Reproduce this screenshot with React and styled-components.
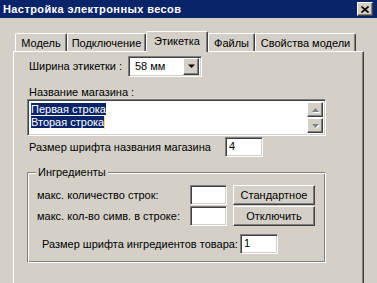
import React from 'react';
import styled, { createGlobalStyle } from 'styled-components';

const GlobalStyle = createGlobalStyle`
  html, body {
    margin: 0;
    padding: 0;
    background: #d4d0c8;
  }
`;

const raised = `
  border: 1px solid;
  border-color: #fff #404040 #404040 #fff;
  box-shadow: inset -1px -1px 0 #808080;
`;

const sunken = `
  border: 1px solid;
  border-color: #808080 #fff #fff #808080;
  box-shadow: inset 1px 1px 0 #404040, inset -1px -1px 0 #d4d0c8;
`;

const Window = styled.div`
  width: 377px;
  height: 283px;
  display: flex;
  flex-direction: column;
  overflow: hidden;
  background: #d4d0c8;
  color: #000;
  font-family: "Liberation Sans", Arial, sans-serif;
  font-size: 11px;
  line-height: 13px;
`;

const TitleBar = styled.div`
  height: 18px;
  flex-shrink: 0;
  display: flex;
  align-items: center;
  justify-content: space-between;
  padding: 0 4px 0 3px;
  background: #0a246a;
  color: #fff;
  font-weight: bold;
  letter-spacing: 0.4px;
`;

const CloseButton = styled.div`
  width: 14px;
  height: 12px;
  display: flex;
  align-items: center;
  justify-content: center;
  background: #d4d0c8;
  ${raised}
`;

const Body = styled.div`
  flex: 1;
  display: flex;
  flex-direction: column;
  padding: 13px 13px 0 13px;
`;

const TabStrip = styled.div`
  height: 20px;
  display: flex;
  align-items: flex-end;
  padding-left: 2px;
`;

const Tab = styled.div`
  box-sizing: border-box;
  width: ${p => p.$w}px;
  height: ${p => (p.$active ? 21 : 18)}px;
  margin-bottom: ${p => (p.$active ? -1 : 0)}px;
  position: ${p => (p.$active ? 'relative' : 'static')};
  z-index: ${p => (p.$active ? 1 : 'auto')};
  padding-top: 3px;
  text-align: center;
  background: #d4d0c8;
  border-left: 1px solid #fff;
  border-top: 1px solid #fff;
  border-right: 1px solid #404040;
  border-radius: 2px 2px 0 0;
  box-shadow: inset -1px 0 0 #808080;
`;

const Panel = styled.div`
  flex: 1;
  display: flex;
  flex-direction: column;
  align-items: flex-start;
  padding: 4px 0 0 13px;
  border-left: 1px solid #fff;
  border-top: 1px solid #fff;
  border-right: 1px solid #404040;
  box-shadow: inset -1px 0 0 #808080;
`;

const FieldRow = styled.div`
  display: flex;
  align-items: center;
  height: ${p => p.$h || 20}px;
  margin-top: ${p => p.$mt || 0}px;
  padding-left: ${p => p.$indent || 2}px;
`;

const Label = styled.span`
  width: ${p => p.$w}px;
  flex-shrink: 0;
  white-space: nowrap;
`;

const Caption = styled.div`
  margin-top: ${p => p.$mt || 0}px;
  padding-left: 2px;
`;

const Combo = styled.div`
  box-sizing: border-box;
  width: 74px;
  height: 21px;
  display: flex;
  align-items: center;
  justify-content: space-between;
  padding: 2px 2px 2px 6px;
  background: #fff;
  ${sunken}
`;

const DropButton = styled.div`
  box-sizing: border-box;
  width: 16px;
  height: 17px;
  display: flex;
  align-items: center;
  justify-content: center;
  background: #d4d0c8;
  ${raised}
`;

const Memo = styled.div`
  box-sizing: border-box;
  width: 299px;
  height: 37px;
  display: flex;
  padding: 2px;
  background: #fff;
  ${sunken}
`;

const MemoText = styled.div`
  flex: 1;
  padding: 1px 0 0 1px;
`;

const Selected = styled.span`
  background: #0a246a;
  color: #fff;
`;

const Caret = styled.span`
  display: inline-block;
  width: 1px;
  height: 13px;
  vertical-align: top;
  background: #f5d58a;
`;

const ScrollBar = styled.div`
  width: 16px;
  display: flex;
  flex-direction: column;
  gap: 1px;
`;

const ScrollButton = styled.div`
  box-sizing: border-box;
  height: 16px;
  display: flex;
  align-items: center;
  justify-content: center;
  background: #d4d0c8;
  ${raised}
`;

const TextBox = styled.div`
  box-sizing: border-box;
  width: ${p => p.$w || 37}px;
  height: 20px;
  padding: 2px 0 0 3px;
  background: #fff;
  ${sunken}
`;

const GroupBox = styled.div`
  position: relative;
  box-sizing: border-box;
  width: 299px;
  margin-top: 15px;
  padding: 12px 0 8px 9px;
  border: 1px solid;
  border-color: #808080 #fff #fff #808080;
  box-shadow: inset 1px 1px 0 #fff, inset -1px -1px 0 #808080;
`;

const Legend = styled.span`
  position: absolute;
  top: -7px;
  left: 8px;
  padding: 0 2px;
  background: #d4d0c8;
`;

const GroupGrid = styled.div`
  display: grid;
  grid-template-columns: 153px 37px 88px;
  grid-auto-rows: 20px;
  row-gap: 1px;
  align-items: center;
`;

const Button = styled.div`
  box-sizing: border-box;
  width: 82px;
  height: 20px;
  margin-left: 6px;
  display: flex;
  align-items: center;
  justify-content: center;
  background: #d4d0c8;
  ${raised}
`;

const Arrow = () => (
  <svg width="7" height="5" viewBox="0 0 7 5">
    <polygon points="0,0.5 7,0.5 3.5,4" fill="#000" />
  </svg>
);

const DisabledArrow = ({ up }) => (
  <svg width="9" height="6" viewBox="0 0 9 6">
    {up ? (
      <>
        <polygon points="4.5,1 1,5 8,5" fill="#fff" transform="translate(1,1)" />
        <polygon points="4.5,1 1,5 8,5" fill="#808080" />
      </>
    ) : (
      <>
        <polygon points="1,1 8,1 4.5,5" fill="#fff" transform="translate(1,1)" />
        <polygon points="1,1 8,1 4.5,5" fill="#808080" />
      </>
    )}
  </svg>
);

const tabs = [
  { label: 'Модель', w: 52 },
  { label: 'Подключение', w: 79 },
  { label: 'Этикетка', w: 62, active: true },
  { label: 'Файлы', w: 47 },
  { label: 'Свойства модели', w: 101 },
];

export default function App() {
  return (
    <>
      <GlobalStyle />
      <Window>
        <TitleBar>
          <span>Настройка электронных весов</span>
          <CloseButton>
            <svg width="8" height="7" viewBox="0 0 8 7">
              <path d="M0.5 0.5 L7.5 6.5 M7.5 0.5 L0.5 6.5" stroke="#000" strokeWidth="1.6" />
            </svg>
          </CloseButton>
        </TitleBar>
        <Body>
          <TabStrip>
            {tabs.map(t => (
              <Tab key={t.label} $w={t.w} $active={t.active}>
                {t.label}
              </Tab>
            ))}
          </TabStrip>
          <Panel>
            <FieldRow $h={21}>
              <Label $w={99}>Ширина этикетки :</Label>
              <Combo>
                <span>58 мм</span>
                <DropButton>
                  <Arrow />
                </DropButton>
              </Combo>
            </FieldRow>
            <Caption $mt={9}>Название магазина :</Caption>
            <Memo>
              <MemoText>
                <Selected>Первая строка</Selected>
                <br />
                <Selected>Вторая строка</Selected>
                <Caret />
              </MemoText>
              <ScrollBar>
                <ScrollButton>
                  <DisabledArrow up />
                </ScrollButton>
                <ScrollButton>
                  <DisabledArrow />
                </ScrollButton>
              </ScrollBar>
            </Memo>
            <FieldRow $mt={1}>
              <Label $w={196}>Размер шрифта названия магазина</Label>
              <TextBox $w={38}>4</TextBox>
            </FieldRow>
            <GroupBox>
              <Legend>Ингредиенты</Legend>
              <GroupGrid>
                <span>макс. количество строк:</span>
                <TextBox />
                <Button>Стандартное</Button>
                <span>макс. кол-во симв. в строке:</span>
                <TextBox />
                <Button>Отключить</Button>
              </GroupGrid>
              <FieldRow $mt={8} $indent={5}>
                <Label $w={198}>Размер шрифта ингредиентов товара:</Label>
                <TextBox $w={38}>1</TextBox>
              </FieldRow>
            </GroupBox>
          </Panel>
        </Body>
      </Window>
    </>
  );
}
